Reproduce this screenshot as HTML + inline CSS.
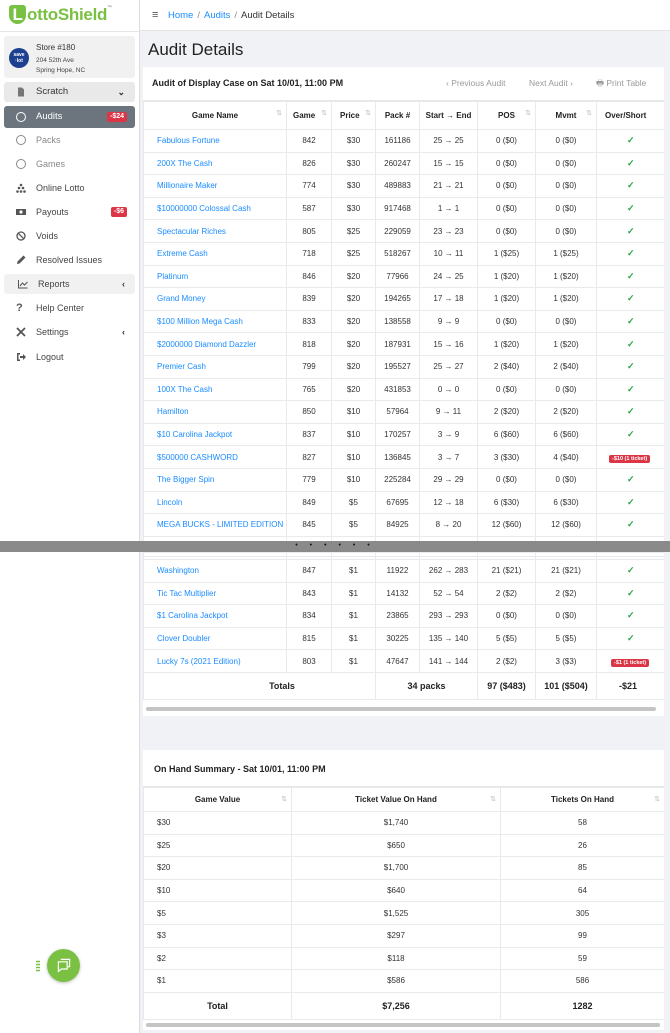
<!DOCTYPE html>
<html><head><meta charset="utf-8">
<style>
*{box-sizing:border-box;margin:0;padding:0}
body{width:670px;height:1033px;overflow:hidden;background:#f1f2f5;font-family:"Liberation Sans",sans-serif;color:#333;position:relative}
.abs{position:absolute}
#side{left:0;top:0;width:140px;height:1033px;background:#fff;border-right:1px solid #dcdcdc}
.logo{left:9px;top:5px;font-size:17px;font-weight:bold;color:#7ac143;letter-spacing:-0.3px}
.logo .L{display:inline-block;width:17px;height:19px;background:#7ac143;color:#fff;border-radius:3px 3px 9px 9px;text-align:center;line-height:19px;margin-right:1px}
.logoline{left:0;top:31px;width:139px;height:1px;background:#e6e6e6}
.store{left:4px;top:36px;width:131px;height:42px;background:#f1f1f1;border-radius:3px}
.store .circ{position:absolute;left:5px;top:12px;width:20px;height:20px;border-radius:50%;background:#1d3f8f;color:#fff;font-size:5px;font-weight:bold;text-align:center;line-height:6px;padding-top:4px}
.store .t1{position:absolute;left:32px;top:7px;font-size:8px;color:#333}
.store .t2{position:absolute;left:32px;top:20px;font-size:6.5px;color:#444;line-height:10px}
.nav{left:4px;width:131px;height:20px;font-size:9px;color:#444;line-height:20px;padding-left:32px;border-radius:3px}
.nav .ic{position:absolute;left:12px;top:5px;width:10px;height:10px}
.nav .circle{border:1.3px solid #666;border-radius:50%}
.badge{position:absolute;right:8px;top:5px;background:#dc3545;color:#fff;font-size:7px;font-weight:bold;line-height:10px;padding:0 3px;border-radius:2px}
.chev{position:absolute;right:10px;top:0;font-size:9px;color:#333;font-weight:bold}
#top{left:140px;top:0;width:530px;height:31px;background:#fff;border-bottom:1px solid #e4e4e4}
.crumb{left:168px;top:10px;font-size:9.5px;color:#333}
.crumb a{color:#1a8cff;text-decoration:none}
.crumb .s{color:#888;margin:0 4px}
h1{position:absolute;left:148px;top:40px;font-size:17px;font-weight:normal;color:#222}
.card{position:absolute;left:143px;width:521px;background:#fff;overflow:hidden}
.ch{font-size:9px;font-weight:bold;color:#222}
table{border-collapse:collapse;table-layout:fixed;position:absolute;left:0;font-size:8px}
td,th{border:1px solid #e8eaee;text-align:center;overflow:hidden;white-space:nowrap;color:#333}
th{font-weight:bold;color:#222;position:relative}
th .so{position:absolute;right:4px;top:7px;color:#bbb;font-size:7px;font-weight:normal}
td.n{text-align:left;padding-left:13px;color:#1a8cff}
.ok{color:#28a745;font-size:9px;font-weight:bold}
.rb{background:#dc3545;color:#fff;font-size:5.5px;font-weight:bold;padding:1px 3px;border-radius:2px}
.bar{left:0;top:541px;width:670px;height:11px;background:#8a8a8a;text-align:center;font-size:7px;color:#111;line-height:10px;letter-spacing:5px}
.sb{position:absolute;left:3px;height:4px;background:#c4c4c4;border-radius:2px}
tr.tot td{font-weight:bold;font-size:9px;color:#222}
</style></head><body>
<div id="side" class="abs">
  <div class="abs logo"><span class="L">L</span>ottoShield<span style="font-size:5px;vertical-align:top;color:#999">™</span></div>
  <div class="abs logoline"></div>
  <div class="abs store"><div class="circ">save<br>·lot</div><div class="t1">Store #180</div><div class="t2">204 52th Ave<br>Spring Hope, NC</div></div>
  <div class="abs nav" style="top:82px;background:#e9e9e9;color:#333;height:20px;font-size:9.5px"><svg class="ic" viewBox="0 0 10 10"><path d="M2 0.5h4l2 2v7h-6z" fill="#777"/></svg>Scratch<span class="chev">⌄</span></div>
  <div class="abs nav" style="top:106px;height:22px;line-height:22px;background:#6c757d;color:#fff;font-size:9.5px"><span class="ic circle" style="border-color:#fff;top:6px"></span>Audits<span class="badge" style="top:6px">-$24</span></div>
  <div class="abs nav" style="top:130px;color:#888"><span class="ic circle" style="border-color:#888"></span>Packs</div>
  <div class="abs nav" style="top:154px;color:#888"><span class="ic circle" style="border-color:#888"></span>Games</div>
  <div class="abs nav" style="top:178px"><svg class="ic" viewBox="0 0 10 10"><g fill="#555"><circle cx="5" cy="2" r="1.3"/><circle cx="3" cy="5" r="1.3"/><circle cx="7" cy="5" r="1.3"/><circle cx="1.5" cy="8.5" r="1.3"/><circle cx="5" cy="8.5" r="1.3"/><circle cx="8.5" cy="8.5" r="1.3"/></g></svg>Online Lotto</div>
  <div class="abs nav" style="top:202px"><svg class="ic" viewBox="0 0 10 10"><rect x="0" y="2" width="10" height="6" fill="#555"/><circle cx="5" cy="5" r="1.6" fill="#fff"/></svg>Payouts<span class="badge">-$6</span></div>
  <div class="abs nav" style="top:226px"><svg class="ic" viewBox="0 0 10 10"><circle cx="5" cy="5" r="4" fill="none" stroke="#555" stroke-width="1.3"/><path d="M2.2 2.2l5.6 5.6" stroke="#555" stroke-width="1.3"/></svg>Voids</div>
  <div class="abs nav" style="top:250px"><svg class="ic" viewBox="0 0 10 10"><path d="M1 9l0.5-2.5 6-6 2 2-6 6z" fill="#555"/></svg>Resolved Issues</div>
  <div class="abs nav" style="top:274px;background:#f1f1f1;padding-left:34px"><svg class="ic" viewBox="0 0 10 10" style="left:14px"><path d="M0.5 1v8h9M2 7l2.5-3 2 2 3-3" fill="none" stroke="#555" stroke-width="1"/></svg>Reports<span class="chev">‹</span></div>
  <div class="abs nav" style="top:298px"><span class="ic" style="font-weight:bold;font-size:11px;line-height:10px;color:#555">?</span>Help Center</div>
  <div class="abs nav" style="top:322px"><svg class="ic" viewBox="0 0 10 10"><path d="M1 1l8 8M9 1L1 9" stroke="#555" stroke-width="1.8"/></svg>Settings<span class="chev">‹</span></div>
  <div class="abs nav" style="top:347px"><svg class="ic" viewBox="0 0 10 10"><path d="M1 1h3v1.5H2.5v5H4V9H1zM4 4h3V2l3 3-3 3V6H4z" fill="#555"/></svg>Logout</div>
  <div class="abs" style="left:36px;top:960px;width:4px;height:12px;background:radial-gradient(circle,#7ac143 0.8px,transparent 1px) 0 0/2px 3px"></div>
  <div class="abs" style="left:47px;top:949px;width:33px;height:33px;border-radius:50%;background:#7ac143;box-shadow:0 1px 3px rgba(0,0,0,.25)"><svg viewBox="0 0 20 20" width="16" height="16" style="position:absolute;left:9px;top:8px"><path d="M6 3h11v9h-2M3 6h11v9H7l-4 3z" fill="none" stroke="#fff" stroke-width="1.5"/></svg></div>
</div>
<div id="top" class="abs"><div class="abs" style="left:12px;top:9px;font-size:11px;color:#555">≡</div></div>
<div class="abs crumb"><a>Home</a><span class="s">/</span><a>Audits</a><span class="s">/</span>Audit Details</div>
<h1>Audit Details</h1>

<div class="card" style="top:67px;height:649px">
  <div class="abs ch" style="left:9px;top:11px">Audit of Display Case on Sat 10/01, 11:00 PM</div>
  <div class="abs" style="left:303px;top:11px;font-size:8.5px;color:#999">‹ Previous Audit</div>
  <div class="abs" style="left:386px;top:11px;font-size:8.5px;color:#999">Next Audit ›</div>
  <div class="abs" style="left:453px;top:11px;font-size:8.5px;color:#999">🖶 Print Table</div>
  <div class="abs" style="left:0;top:33px;width:521px;height:1px;background:#e6e6e6"></div>
  <table style="top:34px;width:530px">
    <colgroup><col style="width:143px"><col style="width:45px"><col style="width:44px"><col style="width:44px"><col style="width:58px"><col style="width:58px"><col style="width:61px"><col style="width:77px"></colgroup>
    <tr style="height:28px"><th>Game Name<span class="so">⇅</span></th><th style="text-align:left;padding-left:6px">Game<span class="so">⇅</span></th><th style="text-align:left;padding-left:8px">Price<span class="so">⇅</span></th><th>Pack #</th><th>Start → End</th><th>POS<span class="so">⇅</span></th><th>Mvmt<span class="so">⇅</span></th><th style="text-align:left;padding-left:8px">Over/Short<span class="so" style="right:2px">⇅</span></th></tr>
    <tr style="height:22.6px"><td class="n">Fabulous Fortune</td><td>842</td><td>$30</td><td>161186</td><td>25 → 25</td><td>0 ($0)</td><td>0 ($0)</td><td style="text-align:left;padding-left:30px"><span class="ok">✓</span></td></tr>
    <tr style="height:22.6px"><td class="n">200X The Cash</td><td>826</td><td>$30</td><td>260247</td><td>15 → 15</td><td>0 ($0)</td><td>0 ($0)</td><td style="text-align:left;padding-left:30px"><span class="ok">✓</span></td></tr>
    <tr style="height:22.6px"><td class="n">Millionaire Maker</td><td>774</td><td>$30</td><td>489883</td><td>21 → 21</td><td>0 ($0)</td><td>0 ($0)</td><td style="text-align:left;padding-left:30px"><span class="ok">✓</span></td></tr>
    <tr style="height:22.6px"><td class="n">$10000000 Colossal Cash</td><td>587</td><td>$30</td><td>917468</td><td>1 → 1</td><td>0 ($0)</td><td>0 ($0)</td><td style="text-align:left;padding-left:30px"><span class="ok">✓</span></td></tr>
    <tr style="height:22.6px"><td class="n">Spectacular Riches</td><td>805</td><td>$25</td><td>229059</td><td>23 → 23</td><td>0 ($0)</td><td>0 ($0)</td><td style="text-align:left;padding-left:30px"><span class="ok">✓</span></td></tr>
    <tr style="height:22.6px"><td class="n">Extreme Cash</td><td>718</td><td>$25</td><td>518267</td><td>10 → 11</td><td>1 ($25)</td><td>1 ($25)</td><td style="text-align:left;padding-left:30px"><span class="ok">✓</span></td></tr>
    <tr style="height:22.6px"><td class="n">Platinum</td><td>846</td><td>$20</td><td>77966</td><td>24 → 25</td><td>1 ($20)</td><td>1 ($20)</td><td style="text-align:left;padding-left:30px"><span class="ok">✓</span></td></tr>
    <tr style="height:22.6px"><td class="n">Grand Money</td><td>839</td><td>$20</td><td>194265</td><td>17 → 18</td><td>1 ($20)</td><td>1 ($20)</td><td style="text-align:left;padding-left:30px"><span class="ok">✓</span></td></tr>
    <tr style="height:22.6px"><td class="n">$100 Million Mega Cash</td><td>833</td><td>$20</td><td>138558</td><td>9 → 9</td><td>0 ($0)</td><td>0 ($0)</td><td style="text-align:left;padding-left:30px"><span class="ok">✓</span></td></tr>
    <tr style="height:22.6px"><td class="n">$2000000 Diamond Dazzler</td><td>818</td><td>$20</td><td>187931</td><td>15 → 16</td><td>1 ($20)</td><td>1 ($20)</td><td style="text-align:left;padding-left:30px"><span class="ok">✓</span></td></tr>
    <tr style="height:22.6px"><td class="n">Premier Cash</td><td>799</td><td>$20</td><td>195527</td><td>25 → 27</td><td>2 ($40)</td><td>2 ($40)</td><td style="text-align:left;padding-left:30px"><span class="ok">✓</span></td></tr>
    <tr style="height:22.6px"><td class="n">100X The Cash</td><td>765</td><td>$20</td><td>431853</td><td>0 → 0</td><td>0 ($0)</td><td>0 ($0)</td><td style="text-align:left;padding-left:30px"><span class="ok">✓</span></td></tr>
    <tr style="height:22.6px"><td class="n">Hamilton</td><td>850</td><td>$10</td><td>57964</td><td>9 → 11</td><td>2 ($20)</td><td>2 ($20)</td><td style="text-align:left;padding-left:30px"><span class="ok">✓</span></td></tr>
    <tr style="height:22.6px"><td class="n">$10 Carolina Jackpot</td><td>837</td><td>$10</td><td>170257</td><td>3 → 9</td><td>6 ($60)</td><td>6 ($60)</td><td style="text-align:left;padding-left:30px"><span class="ok">✓</span></td></tr>
    <tr style="height:22.6px"><td class="n">$500000 CASHWORD</td><td>827</td><td>$10</td><td>136845</td><td>3 → 7</td><td>3 ($30)</td><td>4 ($40)</td><td style="text-align:left;padding-left:12px"><span class="rb">-$10 (1 ticket)</span></td></tr>
    <tr style="height:22.6px"><td class="n">The Bigger Spin</td><td>779</td><td>$10</td><td>225284</td><td>29 → 29</td><td>0 ($0)</td><td>0 ($0)</td><td style="text-align:left;padding-left:30px"><span class="ok">✓</span></td></tr>
    <tr style="height:22.6px"><td class="n">Lincoln</td><td>849</td><td>$5</td><td>67695</td><td>12 → 18</td><td>6 ($30)</td><td>6 ($30)</td><td style="text-align:left;padding-left:30px"><span class="ok">✓</span></td></tr>
    <tr style="height:22.6px"><td class="n">MEGA BUCKS - LIMITED EDITION</td><td>845</td><td>$5</td><td>84925</td><td>8 → 20</td><td>12 ($60)</td><td>12 ($60)</td><td style="text-align:left;padding-left:30px"><span class="ok">✓</span></td></tr>
    <tr style="height:20px"><td></td><td></td><td></td><td></td><td></td><td></td><td></td><td></td></tr>
  </table>
  <table style="top:485px;width:530px">
    <colgroup><col style="width:143px"><col style="width:45px"><col style="width:44px"><col style="width:44px"><col style="width:58px"><col style="width:58px"><col style="width:61px"><col style="width:77px"></colgroup>
    <tr style="height:7px"><td></td><td></td><td></td><td></td><td></td><td></td><td></td><td></td></tr>
    <tr style="height:22.6px"><td class="n">Washington</td><td>847</td><td>$1</td><td>11922</td><td>262 → 283</td><td>21 ($21)</td><td>21 ($21)</td><td style="text-align:left;padding-left:30px"><span class="ok">✓</span></td></tr>
    <tr style="height:22.6px"><td class="n">Tic Tac Multiplier</td><td>843</td><td>$1</td><td>14132</td><td>52 → 54</td><td>2 ($2)</td><td>2 ($2)</td><td style="text-align:left;padding-left:30px"><span class="ok">✓</span></td></tr>
    <tr style="height:22.6px"><td class="n">$1 Carolina Jackpot</td><td>834</td><td>$1</td><td>23865</td><td>293 → 293</td><td>0 ($0)</td><td>0 ($0)</td><td style="text-align:left;padding-left:30px"><span class="ok">✓</span></td></tr>
    <tr style="height:22.6px"><td class="n">Clover Doubler</td><td>815</td><td>$1</td><td>30225</td><td>135 → 140</td><td>5 ($5)</td><td>5 ($5)</td><td style="text-align:left;padding-left:30px"><span class="ok">✓</span></td></tr>
    <tr style="height:22.6px"><td class="n">Lucky 7s (2021 Edition)</td><td>803</td><td>$1</td><td>47647</td><td>141 → 144</td><td>2 ($2)</td><td>3 ($3)</td><td style="text-align:left;padding-left:14px"><span class="rb">-$1 (1 ticket)</span></td></tr>
    <tr class="tot" style="height:27px"><td colspan="3" style="padding-left:45px">Totals</td><td colspan="2">34 packs</td><td>97 ($483)</td><td>101 ($504)</td><td style="text-align:left;padding-left:22px">-$21</td></tr>
  </table>
  <div class="sb" style="top:640px;width:510px"></div>
</div>
<div class="abs bar">• • • • • •</div>

<div class="card" style="top:750px;height:280px">
  <div class="abs ch" style="left:11px;top:14px">On Hand Summary - Sat 10/01, 11:00 PM</div>
  <div class="abs" style="left:0;top:36px;width:521px;height:1px;background:#e6e6e6"></div>
  <table style="top:37px;width:521px">
    <colgroup><col style="width:148px"><col style="width:209px"><col style="width:164px"></colgroup>
    <tr style="height:24px"><th>Game Value<span class="so">⇅</span></th><th>Ticket Value On Hand<span class="so">⇅</span></th><th>Tickets On Hand<span class="so">⇅</span></th></tr>
    <tr style="height:22.6px"><td style="text-align:left;padding-left:13px">$30</td><td>$1,740</td><td>58</td></tr>
    <tr style="height:22.6px"><td style="text-align:left;padding-left:13px">$25</td><td>$650</td><td>26</td></tr>
    <tr style="height:22.6px"><td style="text-align:left;padding-left:13px">$20</td><td>$1,700</td><td>85</td></tr>
    <tr style="height:22.6px"><td style="text-align:left;padding-left:13px">$10</td><td>$640</td><td>64</td></tr>
    <tr style="height:22.6px"><td style="text-align:left;padding-left:13px">$5</td><td>$1,525</td><td>305</td></tr>
    <tr style="height:22.6px"><td style="text-align:left;padding-left:13px">$3</td><td>$297</td><td>99</td></tr>
    <tr style="height:22.6px"><td style="text-align:left;padding-left:13px">$2</td><td>$118</td><td>59</td></tr>
    <tr style="height:22.6px"><td style="text-align:left;padding-left:13px">$1</td><td>$586</td><td>586</td></tr>
    <tr class="tot" style="height:27px"><td>Total</td><td>$7,256</td><td>1282</td></tr>
  </table>
  <div class="sb" style="top:273px;width:514px"></div>
</div>
</body></html>
